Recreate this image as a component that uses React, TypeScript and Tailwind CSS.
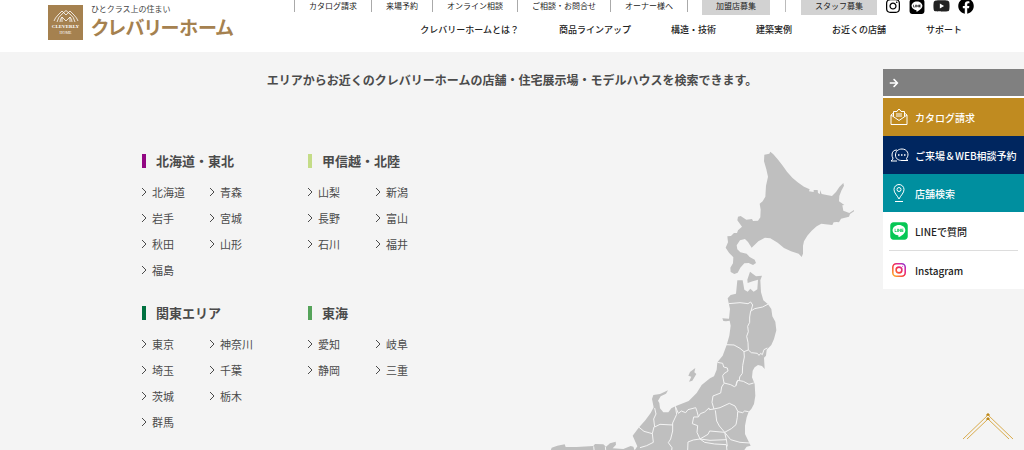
import React from 'react';
import { FaArrowRight, FaFacebook, FaInstagram, FaLine, FaYoutube } from 'react-icons/fa';

const topLinks = ['カタログ請求', '来場予約', 'オンライン相談', 'ご相談・お問合せ', 'オーナー様へ'];

const mainLinks = ['クレバリーホームとは？', '商品ラインアップ', '構造・技術', '建築実例', 'お近くの店舗', 'サポート'];

const areas = [
  { name: '北海道・東北', bar: 'bg-[#920783]', prefs: ['北海道', '青森', '岩手', '宮城', '秋田', '山形', '福島'] },
  { name: '甲信越・北陸', bar: 'bg-[#c4dc87]', prefs: ['山梨', '新潟', '長野', '富山', '石川', '福井'] },
  { name: '関東エリア', bar: 'bg-[#007140]', prefs: ['東京', '神奈川', '埼玉', '千葉', '茨城', '栃木', '群馬'] },
  { name: '東海', bar: 'bg-[#55a35a]', prefs: ['愛知', '岐阜', '静岡', '三重'] },
];

const Logo = () => (
  <a href="#" className="flex gap-2 pt-[5px]">
    <span className="flex h-[35px] w-[35px] flex-col items-center bg-[#a5814f] pt-1 text-white">
      <svg viewBox="0 0 28 14" className="h-3.5 w-7" fill="none" stroke="currentColor" strokeWidth="0.8">
        <path d="M5 13Q6 8 10 5L14 1.500L18 5Q22 8 23 13" />
        <path d="M8 13Q8 10 10 8L14 12L18 8Q20 10 20 13M10 8V13M18 8V13M6 6L10 2L14 6L18 2L22 6M6 6Q3 9 2 12M22 6Q25 9 26 12" />
      </svg>
      <span className="mt-px font-['Liberation_Serif',serif] text-[5px] leading-[6px] font-bold">CLEVERLY</span>
      <span className="font-['Liberation_Serif',serif] text-[4px] leading-[5px]">HOME</span>
    </span>
    <span className="flex flex-col">
      <span className="text-[8px] leading-2 text-[#444]">ひとクラス上の住まい</span>
      <span className="text-[19px] leading-7 font-bold text-[#a5814f] [font-feature-settings:'palt']">クレバリーホーム</span>
    </span>
  </a>
);

const Header = () => (
  <header className="flex h-[52px] justify-between bg-white pl-12">
    <Logo />
    <div className="flex flex-col items-end">
      <div className="flex h-[15px] items-start pr-[50px] text-[8px] leading-3">
        <nav className="flex border-r border-[#aaa]">
          {topLinks.map((label) => (
            <a key={label} href="#" className="border-l border-[#aaa] px-3.5">{label}</a>
          ))}
        </nav>
        <a href="#" className="ml-3.5 h-[15px] bg-[#d2d2d2] px-3.5">加盟店募集</a>
        <span className="mx-[15px] h-3 w-px bg-[#bbb]" />
        <a href="#" className="h-[15px] bg-[#d2d2d2] px-3.5">スタッフ募集</a>
        <div className="ml-2 flex gap-2 text-black">
          <a href="#" aria-label="Instagram"><FaInstagram className="-mt-0.5 h-4 w-4" /></a>
          <a href="#" aria-label="LINE"><FaLine className="-mt-0.5 h-[17px] w-4" /></a>
          <a href="#" aria-label="YouTube"><FaYoutube className="-mt-0.5 h-4 w-[17px] text-[#222]" /></a>
          <a href="#" aria-label="Facebook"><FaFacebook className="-mt-0.5 h-4 w-4" /></a>
        </div>
      </div>
      <nav className="mt-2 flex gap-10 pr-[62px] text-[9px] leading-[14px] font-medium">
        {mainLinks.map((label) => (
          <a key={label} href="#">{label}</a>
        ))}
      </nav>
    </div>
  </header>
);

const AreaList = ({ name, bar, prefs }: { name: string; bar: string; prefs: string[] }) => (
  <section>
    <h2 className="flex items-center gap-2.5 text-[13px] leading-5 font-bold">
      <span className={`h-3.5 w-1 ${bar}`} />
      {name}
    </h2>
    <ul className="mt-2 grid grid-cols-[68px_68px] text-[11px] leading-[26px]">
      {prefs.map((pref) => (
        <li key={pref}>
          <a href="#" className="flex items-center gap-1.5">
            <svg viewBox="0 0 4 8" className="h-2 w-1 overflow-visible" fill="none" stroke="currentColor">
              <path d="M0 0L4 4L0 8" />
            </svg>
            {pref}
          </a>
        </li>
      ))}
    </ul>
  </section>
);

const JapanMap = () => (
  <svg viewBox="550 152 332 300" className="h-[300px] w-[332px] shrink-0" fill="#bfbfbf" role="img" aria-label="日本地図">
    {/* Hokkaido */}
    <g transform="translate(710 140) scale(0.33333)">
      <path d="M181 38L190 46L203 61L216 77L231 98L247 116L263 130L282 143L299 151L297 157L311 159L311 153L323 153L324 162L330 165L330 153L335 165L350 168L366 171L378 159L388 144L400 132L402 140L394 155L388 171L387 187L403 198L397 199L400 215L418 222L432 213L432 217L420 225L417 233L393 239L387 250L381 249L371 250L367 258L346 256L334 254L320 262L305 275L292 290L282 307L279 320L279 344L275 354L266 344L243 337L222 327L203 311L181 298L165 296L145 307L125 326L114 309L105 300L90 304L80 319L82 331L91 340L110 344L119 354L134 362L138 372L129 378L116 372L103 373L91 386L83 401L73 405L62 399L61 386L69 373L70 355L57 341L47 326L54 310L52 292L63 291L72 282L81 282L84 274L96 263L82 244L84 233L92 231L109 242L126 240L129 246L144 245L151 235L152 212L149 194L158 187L166 173L168 140L174 113L169 91L162 67L163 47L178 44Z" />
    </g>
    {/* Honshu */}
    <g transform="translate(630 260) scale(0.33333)">
      <path d="M322 64L338 64L343 92L353 98L361 89L371 98L382 91L384 62L368 67L353 72L352 62L360 38L378 52L396 50L391 64L393 100L400 124L414 136L424 150L427 172L436 188L439 214L432 240L424 258L410 272L408 290L402 296L404 330L396 321L384 318L374 325L368 335L366 355L374 375L376 410L372 435L364 450L356 458L350 475L345 500L345 525L362 560L350 563L338 580L10 580L22 562L8 530L26 506L46 484L62 462L71 445L66 420L70 408L90 405L114 394L108 404L92 412L84 425L88 432L90 448L100 460L115 460L124 448L136 442L176 426L200 402L215 378L240 358L252 352L260 332L262 310L278 290L290 258L298 230L302 200L299 185L288 187L280 186L277 178L297 179L300 150L296 132L293 118L302 108L318 104Z" />
      <path d="M196 327L193 340L199 345L187 365L177 368L184 353L175 350L180 339Z" />
      <path d="M-235 566L-218 560L-196 556L-193 564L-160 564L-110 561L-105 555L-80 556L-72 563L-60 553L-43 548L-42 557L-52 568L-20 570L2 561L10 563L16 580L-240 580Z" />
      <g fill="none" stroke="#f4f4f4" strokeWidth="3" strokeLinejoin="round">
        <path d="M296 134L330 131L354 134L362 129L368 138L363 156L374 149L398 144L415 135" />
        <path d="M362 156L359 174L359 190L353 202L355 218L350 232L354 250L355 273" />
        <path d="M288 257L312 258L330 268L342 278L355 273L364 281L382 283L387 289L392 283L397 287L402 272L412 267" />
        <path d="M342 278L343 294L338 320L337 343L329 354L328 363L320 368L318 380" />
        <path d="M262 310L278 313L281 324L292 327L294 336L282 344L278 350L282 372L302 377L313 383L318 380L323 364L340 367L357 376L371 372" />
        <path d="M282 373L275 384L272 402L249 411L246 430L252 450L270 446L298 433L315 441L324 458L338 461L344 456L356 458" />
        <path d="M256 454L260 486L268 501L284 520L304 509L318 497L322 475L323 458" />
        <path d="M252 450L238 452L237 447L224 459L211 464L205 474L191 474L187 494L203 500L201 520L210 540L234 526L239 516L284 520" />
        <path d="M205 473L201 457L197 446L174 452L167 461L154 456L145 463L136 442" />
        <path d="M136 442L140 466L128 492L128 516L122 540L115 551L126 566L125 575" />
        <path d="M74 447L78 465L71 480L74 504L90 496L128 498M72 504L67 524L70 550L50 560L30 566" />
        <path d="M26 504L42 517L67 524" />
        <path d="M210 540L190 543L174 549L173 575M210 540L224 550L254 555L289 557L291 575" />
        <path d="M210 540L240 544L289 542L284 520L302 542L330 550L359 552M289 541L292 562" />
        <path d="M-109 562L-107 580M-74 563L-72 580" />
      </g>
    </g>
  </svg>
);

const MailIcon = () => (
  <svg viewBox="0 0 18 18" className="h-[18px] w-[18px]" fill="none" stroke="white">
    <path d="M3.500 5L1 7V16.500H17V7L14.500 5M1 7L9 12.500L17 7M3.500 8.500V3.500H7Q9 -1 11 3.500H14.500V8.500M6 6H12M6 8H12" />
  </svg>
);

const TalkIcon = () => (
  <svg viewBox="0 0 19 14" className="h-3.5 w-[19px]" fill="none" stroke="white">
    <path d="M7 2Q2 2 2 7Q2 9 3 10Q3 12 1 13H7M12 1C8 1 5.500 3.500 5.500 7S8 12.500 12 12.500H18Q16.500 12 16.500 10.500C20 6 17 1 12 1Z" />
    <path d="M8 7H9.500M11 7H12.500M14 7H15.500" strokeWidth="1.500" />
  </svg>
);

const PinIcon = () => (
  <svg viewBox="0 0 12 18" className="h-[18px] w-3" fill="none" stroke="white">
    <path d="M6 15C4 11 1 9 1 5.500A5 5 0 0 1 11 5.500C11 9 8 11 6 15ZM2 17.500H10" />
    <circle cx="6" cy="5.500" r="2" />
  </svg>
);

const InstagramIcon = () => (
  <svg viewBox="0 0 14 14" className="h-3.5 w-3.5" fill="none" stroke="url(#insta)" strokeWidth="1.600">
    <defs>
      <linearGradient id="insta" gradientUnits="userSpaceOnUse" x1="1" y1="13" x2="13" y2="1">
        <stop offset="0" stopColor="#ffb52d" />
        <stop offset="0.500" stopColor="#f52d48" />
        <stop offset="0.800" stopColor="#d32bab" />
        <stop offset="1" stopColor="#8134cf" />
      </linearGradient>
    </defs>
    <rect x="0.800" y="0.800" width="12.400" height="12.400" rx="3.500" />
    <circle cx="7" cy="7" r="2.900" />
    <circle cx="10.600" cy="3.400" r="0.200" strokeWidth="1" />
  </svg>
);

const sideLinks = [
  { label: 'カタログ請求', icon: <MailIcon />, style: 'bg-[#c08b20] text-white' },
  { label: 'ご来場＆WEB相談予約', icon: <TalkIcon />, style: 'bg-[#00265f] text-white' },
  { label: '店舗検索', icon: <PinIcon />, style: 'bg-[#008f9f] text-white' },
  { label: 'LINEで質問', icon: <FaLine className="h-5 w-5 text-[#06c755]" />, style: '' },
  { label: 'Instagram', icon: <InstagramIcon />, style: '' },
];

const SideMenu = () => (
  <aside className="absolute top-[69px] right-0 w-[141px] bg-white">
    <button type="button" aria-label="閉じる" className="flex h-[27px] w-full items-center bg-[#808080] pl-1.5 text-white">
      <FaArrowRight className="h-2.5 w-2.5" />
    </button>
    <nav className="mt-0.5 text-[10px] font-medium">
      {sideLinks.map(({ label, icon, style }, i) => (
        <React.Fragment key={label}>
          {i === 4 && <hr className="mx-1.5 border-[#ddd]" />}
          <a href="#" className={`flex h-[38px] items-center whitespace-nowrap ${style}`}>
            <span className="flex w-8 justify-center">{icon}</span>
            {label}
          </a>
        </React.Fragment>
      ))}
    </nav>
  </aside>
);

const App = () => {
  return (
    <div className="relative h-screen overflow-hidden bg-[#f4f4f4] font-['Noto_Sans_CJK_JP',sans-serif] text-[#222]">
      <Header />
      <main className="text-[#4b4b4b]">
        <p className="pt-5 text-center text-[12px] leading-4 font-bold">
          エリアからお近くのクレバリーホームの店舗・住宅展示場・モデルハウスを検索できます。
        </p>
        <div className="mx-auto mt-[63px] flex max-w-[740px] justify-between">
          <div className="grid grid-cols-[136px_136px] content-start gap-x-[30px] gap-y-5">
            {areas.map((area) => (
              <AreaList key={area.name} {...area} />
            ))}
          </div>
          <JapanMap />
        </div>
      </main>
      <SideMenu />
      <a href="#" aria-label="ページトップへ" className="absolute right-2.5 bottom-2.5">
        <svg viewBox="0 0 52 27" className="h-[27px] w-[52px]" fill="none" stroke="#d9ab4c">
          <path d="M1 26L26 2L51 26M5 26L26 6L47 26" />
          <path d="M24.500 2.500L26 1L27.500 2.500M24.500 6.500L26 5L27.500 6.500" stroke="#bd8717" strokeWidth="1.500" />
        </svg>
      </a>
    </div>
  );
};

export default App;
